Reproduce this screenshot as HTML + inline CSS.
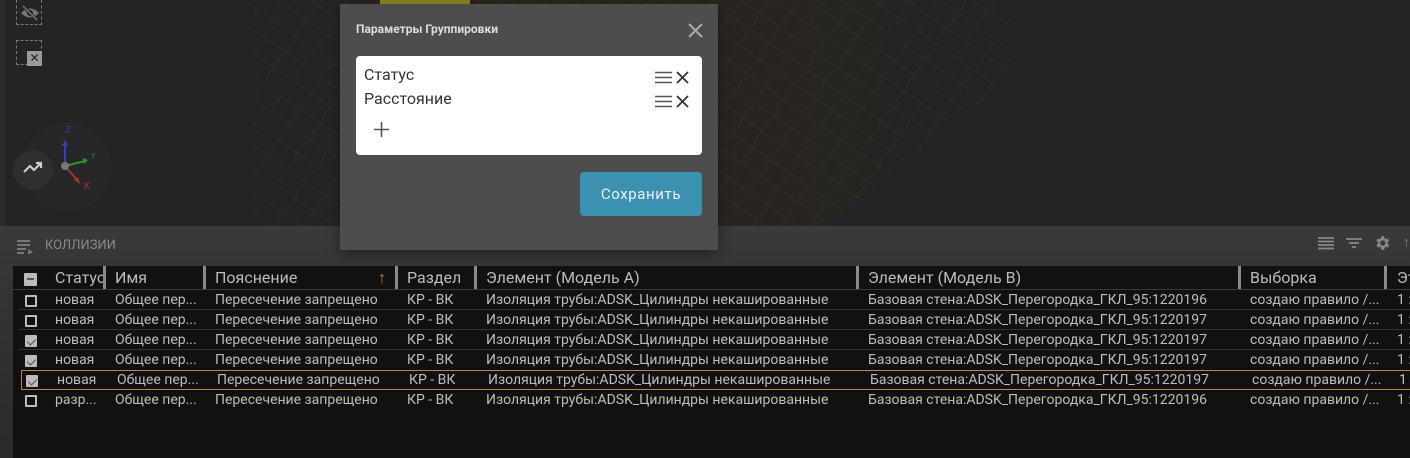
<!DOCTYPE html>
<html><head><meta charset="utf-8"><style>
*{margin:0;padding:0;box-sizing:border-box}
body{width:1410px;height:458px;overflow:hidden;background:#232323;font-family:"Roboto","Liberation Sans","DejaVu Sans",sans-serif;position:relative}
.abs{position:absolute}
.view{left:0;top:0;width:1410px;height:226px;background:#242424;overflow:hidden}
.strip{left:0;top:0;width:5px;height:226px;background:#2b2b2b}
.model{left:250px;top:-40px;width:760px;height:300px;background:
repeating-linear-gradient(35deg,rgba(120,105,85,.09) 0 1px,transparent 1px 19px),
repeating-linear-gradient(-55deg,rgba(120,105,85,.08) 0 1px,transparent 1px 23px),
linear-gradient(90deg,rgba(30,28,26,0) 0,#282522 30%,#282521 70%,rgba(36,36,36,0) 100%);
clip-path:polygon(0 0,100% 0,100% 40%,70% 100%,0 100%)}
.panel{left:0;top:226px;width:1410px;height:232px;background:linear-gradient(180deg,#3a3a3a 0,#363636 40px,#2a2a2a 100%)}
.tbl{left:13px;top:266px;width:1397px;height:192px;background:#111}
.hdr{left:13px;top:266px;width:1397px;height:24px;border-bottom:1px solid #3a3a3a;color:#bbb;font-size:16px}
.hdr span{position:absolute;top:2px;white-space:nowrap}
.bar{position:absolute;top:0;width:3px;height:23px;background:#8a8a8a}
.row{position:absolute;left:18px;width:1392px;height:20px;border-bottom:1px solid #333;color:#bdbdbd;font-size:14px}
.row span{position:absolute;top:2px;white-space:nowrap}
.cb{position:absolute;left:7px;top:5px;width:12px;height:12px;border:2px solid #bbb;border-radius:1px}
.cb.on{background:#bbb;border-color:#bbb}
.cb.on:after{content:"";position:absolute;left:2px;top:0px;width:4px;height:7px;border:solid #555;border-width:0 1.5px 1.5px 0;transform:rotate(45deg)}
.sel{border:1px solid #c8822e}
.dlg{left:340px;top:4px;width:378px;height:246px;background:#4d4d4d}
</style></head><body>
<div class="abs view">
 <div class="abs strip"></div>
 <div class="abs model"></div>
 <div class="abs" style="left:380px;top:0;width:90px;height:4px;background:#8a8420"></div>
 <div class="abs" style="left:16px;top:0;width:26px;height:25px;border:1px dashed #777;border-top:none"></div>
 <svg class="abs" style="left:20px;top:5px" width="20" height="16" viewBox="0 0 20 16"><path d="M1 8 Q10 -1 19 8 Q10 17 1 8Z" fill="#777"/><circle cx="10" cy="8" r="3" fill="#242424"/><path d="M3 1 L17 15" stroke="#242424" stroke-width="3"/><path d="M3 1 L17 15" stroke="#777" stroke-width="1.5"/></svg>
 <div class="abs" style="left:16px;top:40px;width:26px;height:25px;border:1px dashed #777"></div>
 <div class="abs" style="left:27px;top:51px;width:15px;height:15px;background:#999;color:#222;font-size:12px;line-height:15px;text-align:center;font-weight:bold">✕</div>
 <div class="abs" style="left:22px;top:122px;width:90px;height:90px;border-radius:50%;background:#272727"></div>
 <div class="abs" style="left:13px;top:150px;width:40px;height:40px;border-radius:50%;background:#2f2f2f"></div>
 <svg class="abs" style="left:22px;top:160px" width="22" height="16"><path d="M2 12 L8 6 L12 10 L19 3 M14 3 H19 V8" stroke="#ccc" stroke-width="2.2" fill="none"/></svg>
 <svg class="abs" style="left:55px;top:122px" width="50" height="70">
  <text x="10" y="11" fill="#3a3ab0" font-size="10" font-family="Liberation Sans">Z</text>
  <path d="M10 44 V22" stroke="#3d3dc0" stroke-width="2"/><path d="M7 24 L10 18 L13 24Z" fill="#3d3dc0"/>
  <path d="M10 44 L30 39" stroke="#2a9a2a" stroke-width="2"/><path d="M28 36 L33 38 L29 42Z" fill="#2a9a2a"/>
  <text x="36" y="36" fill="#2a9a2a" font-size="7" font-family="Liberation Sans">Y</text>
  <path d="M10 44 L22 58" stroke="#b03030" stroke-width="2"/><path d="M19 58 L25 62 L23 55Z" fill="#b03030"/>
  <text x="28" y="67" fill="#b03030" font-size="10" font-family="Liberation Sans">X</text>
  <circle cx="10" cy="44" r="4" fill="#777"/>
 </svg>
</div>
<div class="abs panel"></div>
<svg class="abs" style="left:16px;top:239px" width="18" height="15"><path d="M1 2H14M1 6H14M1 10H10M1 14H8" stroke="#777" stroke-width="2"/><path d="M12 10 L17 13 L12 16Z" fill="#777"/></svg>
<div class="abs" style="left:45px;top:238px;color:#8a8a8a;font-size:13px">КОЛЛИЗИИ</div>
<svg class="abs" style="left:1318px;top:236px" width="16" height="14"><path d="M0 2H16M0 5.5H16M0 9H16M0 12.5H16" stroke="#888" stroke-width="1.8"/></svg>
<svg class="abs" style="left:1346px;top:236px" width="16" height="14"><path d="M0 3H16M3 7H13M6 11H10" stroke="#888" stroke-width="1.8"/></svg>
<svg class="abs" style="left:1373px;top:234px" width="18" height="18" viewBox="0 0 24 24"><path fill="#888" d="M19.4 13a7.5 7.5 0 0 0 0-2l2.1-1.6-2-3.5-2.5 1a7 7 0 0 0-1.7-1L15 3h-4l-.4 2.9a7 7 0 0 0-1.7 1l-2.5-1-2 3.5L6.6 11a7.5 7.5 0 0 0 0 2l-2.1 1.6 2 3.5 2.5-1a7 7 0 0 0 1.7 1L11 21h4l.4-2.9a7 7 0 0 0 1.7-1l2.5 1 2-3.5zM13 15.5a3.5 3.5 0 1 1 0-7 3.5 3.5 0 0 1 0 7z"/></svg>
<div class="abs" style="left:1403px;top:234px;color:#888;font-size:13px">↑</div>
<div class="abs tbl"></div>
<div class="abs hdr">
 <div class="abs" style="left:11px;top:7px;width:13px;height:13px;background:#bbb;border-radius:1px"><div style="position:absolute;left:3px;top:5px;width:7px;height:2px;background:#555"></div></div>
 <span style="left:42px">Статус</span><div class="bar" style="left:90px"></div>
 <span style="left:102px">Имя</span><div class="bar" style="left:190px"></div>
 <span style="left:202px">Пояснение</span><span style="left:365px;color:#c8822e">↑</span><div class="bar" style="left:382px"></div>
 <span style="left:394px">Раздел</span><div class="bar" style="left:461px"></div>
 <span style="left:473px">Элемент (Модель A)</span><div class="bar" style="left:843px"></div>
 <span style="left:855px">Элемент (Модель B)</span><div class="bar" style="left:1225px"></div>
 <span style="left:1237px">Выборка</span><div class="bar" style="left:1371px"></div>
 <span style="left:1384px">Эт</span>
</div>
<div class="abs" style="left:13px;top:266px;width:1397px;height:192px;overflow:hidden">
<div class="row" style="top:24px;left:5px"><div class="cb"></div><span style="left:37px">новая</span><span style="left:97px">Общее пер...</span><span style="left:197px">Пересечение запрещено</span><span style="left:389px">КР - ВК</span><span style="left:468px">Изоляция трубы:ADSK_Цилиндры некашированные</span><span style="left:850px">Базовая стена:ADSK_Перегородка_ГКЛ_95:1220196</span><span style="left:1232px">создаю правило /...</span><span style="left:1379px">1 :</span></div>
<div class="row" style="top:44px;left:5px"><div class="cb"></div><span style="left:37px">новая</span><span style="left:97px">Общее пер...</span><span style="left:197px">Пересечение запрещено</span><span style="left:389px">КР - ВК</span><span style="left:468px">Изоляция трубы:ADSK_Цилиндры некашированные</span><span style="left:850px">Базовая стена:ADSK_Перегородка_ГКЛ_95:1220197</span><span style="left:1232px">создаю правило /...</span><span style="left:1379px">1 :</span></div>
<div class="row" style="top:64px;left:5px"><div class="cb on"></div><span style="left:37px">новая</span><span style="left:97px">Общее пер...</span><span style="left:197px">Пересечение запрещено</span><span style="left:389px">КР - ВК</span><span style="left:468px">Изоляция трубы:ADSK_Цилиндры некашированные</span><span style="left:850px">Базовая стена:ADSK_Перегородка_ГКЛ_95:1220197</span><span style="left:1232px">создаю правило /...</span><span style="left:1379px">1 :</span></div>
<div class="row" style="top:84px;left:5px;border-bottom:none"><div class="cb on"></div><span style="left:37px">новая</span><span style="left:97px">Общее пер...</span><span style="left:197px">Пересечение запрещено</span><span style="left:389px">КР - ВК</span><span style="left:468px">Изоляция трубы:ADSK_Цилиндры некашированные</span><span style="left:850px">Базовая стена:ADSK_Перегородка_ГКЛ_95:1220197</span><span style="left:1232px">создаю правило /...</span><span style="left:1379px">1 :</span></div>
<div class="row sel" style="top:104px;left:8px"><div class="cb on" style="left:4px;top:4px"></div><span style="left:35px;top:1px">новая</span><span style="left:95px;top:1px">Общее пер...</span><span style="left:195px;top:1px">Пересечение запрещено</span><span style="left:387px;top:1px">КР - ВК</span><span style="left:466px;top:1px">Изоляция трубы:ADSK_Цилиндры некашированные</span><span style="left:848px;top:1px">Базовая стена:ADSK_Перегородка_ГКЛ_95:1220197</span><span style="left:1230px;top:1px">создаю правило /...</span><span style="left:1377px;top:1px">1</span></div>
<div class="row" style="top:124px;left:5px;border-bottom:none"><div class="cb"></div><span style="left:37px">разр...</span><span style="left:97px">Общее пер...</span><span style="left:197px">Пересечение запрещено</span><span style="left:389px">КР - ВК</span><span style="left:468px">Изоляция трубы:ADSK_Цилиндры некашированные</span><span style="left:850px">Базовая стена:ADSK_Перегородка_ГКЛ_95:1220196</span><span style="left:1232px">создаю правило /...</span><span style="left:1379px">1 :</span></div>
</div>
<div class="abs dlg" style="box-shadow:0 4px 12px rgba(0,0,0,.4)">
 <div class="abs" style="left:16px;top:18px;color:#ddd;font-size:12px;font-weight:bold">Параметры Группировки</div>
 <svg class="abs" style="left:348px;top:19px" width="15" height="15"><path d="M1 1L14 14M14 1L1 14" stroke="#aaa" stroke-width="2"/></svg>
 <div class="abs" style="left:16px;top:52px;width:346px;height:99px;background:#fff;border-radius:4px">
  <div class="abs" style="left:8px;top:9px;color:#333;font-size:16px">Статус</div>
  <div class="abs" style="left:8px;top:33px;color:#333;font-size:16px">Расстояние</div>
  <svg class="abs" style="left:299px;top:15px" width="36" height="13"><path d="M0 1.5H17M0 6.5H17M0 11.5H17" stroke="#555" stroke-width="1.5"/><path d="M22 1L33 12M33 1L22 12" stroke="#333" stroke-width="1.8"/></svg>
  <svg class="abs" style="left:299px;top:39px" width="36" height="13"><path d="M0 1.5H17M0 6.5H17M0 11.5H17" stroke="#555" stroke-width="1.5"/><path d="M22 1L33 12M33 1L22 12" stroke="#333" stroke-width="1.8"/></svg>
  <svg class="abs" style="left:18px;top:66px" width="15" height="15"><path d="M7.5 0V15M0 7.5H15" stroke="#555" stroke-width="1.6"/></svg>
 </div>
 <div class="abs" style="left:240px;top:168px;width:122px;height:44px;background:#3a92b0;border-radius:4px;color:#eef;font-size:15px;line-height:44px;text-align:center;letter-spacing:.6px">Сохранить</div>
</div>
</body></html>
